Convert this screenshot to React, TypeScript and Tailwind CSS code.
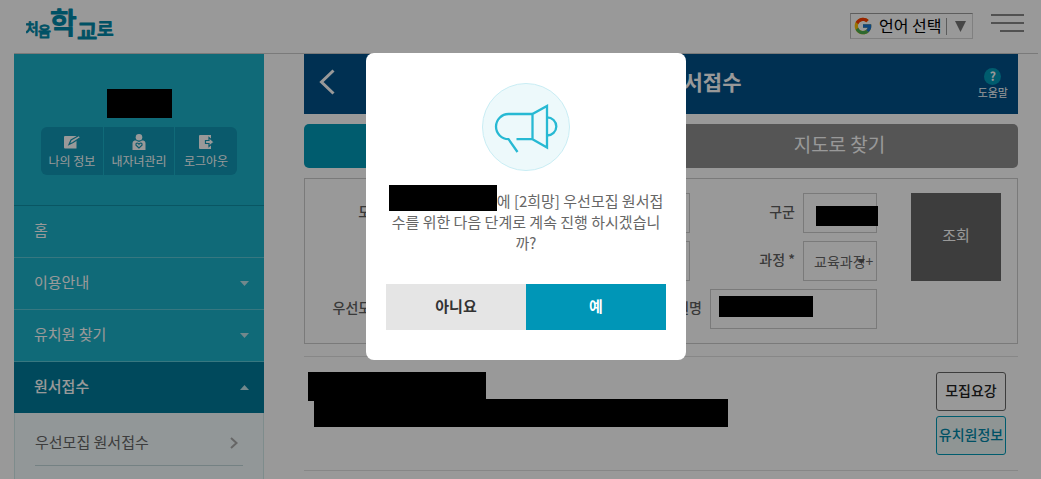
import type { ReactNode } from "react";
import { FcGoogle } from "react-icons/fc";

function Logo() {
   return (
      <svg
         viewBox="0 0 92 44"
         className="h-11 w-[92px]"
         fill="#0088a8"
         stroke="#0088a8"
         strokeLinejoin="round"
         fontFamily="'Noto Sans CJK KR', sans-serif"
         fontWeight="500">
         <text x="-1" y="34" fontSize="15" strokeWidth="0.8">처</text>
         <text x="12" y="36" fontSize="14" strokeWidth="0.8">음</text>
         <text x="24" y="34" fontSize="29" strokeWidth="1.2">학</text>
         <text x="51" y="39" fontSize="22" strokeWidth="1">교</text>
         <text x="71" y="36" fontSize="18" strokeWidth="1">로</text>
      </svg>
   );
}

function MegaphoneIcon() {
   return (
      <svg viewBox="0 0 88 88" className="h-[88px] w-[88px]" fill="none" stroke="#27b9d3" strokeWidth="2.3">
         <circle cx="44" cy="44" r="43.5" fill="#edf9fb" stroke="#c9edf4" strokeWidth="1" />
         <path d="M50.5 31H26.5A12.500 12.600 0 0 0 26.500 56.200L35.500 69" />
         <path d="M34.5 56.2H50.5V31L65 23V64.5L50.5 56.2" />
         <path d="M65 34.3A9.3 9.1 0 0 1 65 52.5" />
      </svg>
   );
}

function EditIcon() {
   return (
      <svg viewBox="0 0 18 16" className="h-4 w-[18px]">
         <path d="M2 2H13.500V14.500H2Q1 14.500 1 13.500V3Q1 2 2 2Z" fill="#fff" />
         <path d="M6 10.500L8 6L16 1.500L17.500 3.500L10 8.500Z" fill="#fff" stroke="#1196b4" strokeWidth="1.2" />
      </svg>
   );
}

function ChildIcon() {
   return (
      <svg viewBox="0 0 18 16" className="h-4 w-[18px]">
         <circle cx="9" cy="3.3" r="3.3" fill="#fff" />
         <path d="M4.500 6.500H6L9 8L12 6.500H13.500Q15.500 7 15.500 9V16H2.500V9Q2.500 7 4.500 6.500Z" fill="#fff" />
         <path d="M9 14L6 11.200Q5.500 9.500 7 9Q8.300 8.900 9 10.200Q9.700 8.900 11 9Q12.500 9.500 12 11.200Z" fill="none" stroke="#1196b4" strokeWidth="1.2" />
      </svg>
   );
}

function LogoutIcon() {
   return (
      <svg viewBox="0 0 18 16" className="h-4 w-[18px]">
         <path d="M3 1H14V15H3Q2 15 2 14V2Q2 1 3 1Z" fill="#fff" />
         <path d="M8.500 6.500H12V3.500L17 8L12 12.500V9.500H8.500Z" fill="#fff" stroke="#1196b4" strokeWidth="1.2" />
      </svg>
   );
}

function Caret({ up = false }: { up?: boolean }) {
   return (
      <svg viewBox="0 0 9 5" className="h-[5px] w-[9px]" fill="#bfe3ea">
         <path d={up ? "M0 5L4.5 0L9 5Z" : "M0 0H9L4.5 5Z"} />
      </svg>
   );
}

function ProfileLink({ icon, children }: { icon: ReactNode; children: ReactNode }) {
   return (
      <a href="#" className="flex flex-col items-center bg-[#1196b4] pt-[7px] text-xs leading-[18px] whitespace-nowrap text-white">
         {icon}
         <span className="pt-[2px]">{children}</span>
      </a>
   );
}

function Sidebar() {
   const items = [
      { name: "홈", caret: false },
      { name: "이용안내", caret: true },
      { name: "유치원 찾기", caret: true },
   ];

   return (
      <aside className="flex w-[250px] shrink-0 flex-col">
         <div className="flex h-[152px] flex-col items-center border-b border-[#0f8fa5] bg-[#1bb1c8] pt-[35px]">
            <div className="h-[29px] w-[65px] bg-black"></div>
            <div className="mt-[9px] grid h-12 w-[196px] grid-cols-[62px_70px_62px] gap-px overflow-hidden rounded-md">
               <ProfileLink icon={<EditIcon />}>나의 정보</ProfileLink>
               <ProfileLink icon={<ChildIcon />}>내자녀관리</ProfileLink>
               <ProfileLink icon={<LogoutIcon />}>로그아웃</ProfileLink>
            </div>
         </div>
         <nav className="flex flex-1 flex-col text-[15px] text-white">
            {items.map((item) => (
               <a
                  key={item.name}
                  href="#"
                  className="flex h-[52px] items-center justify-between border-b border-[#5cc6d6] bg-[#1bb1c8] pr-[15px] pl-5">
                  <span className="pb-[2px]">{item.name}</span>
                  {item.caret && <Caret />}
               </a>
            ))}
            <a href="#" className="flex h-[51px] items-center justify-between bg-[#007b99] pr-[15px] pl-5 font-medium">
               <span className="pb-[2px]">원서접수</span>
               <Caret up />
            </a>
            <div className="flex-1 border-x border-[#d3e9e9] bg-[#f3fcfd] px-5">
               <a href="#" className="flex h-[53px] items-center justify-between border-b border-[#c2d8da] pt-[8px] pr-[5px] text-[#666]">
                  <span className="pb-[2px]">우선모집 원서접수</span>
                  <svg viewBox="0 0 8 12" className="h-3 w-2" fill="none" stroke="#aaa" strokeWidth="2">
                     <path d="M1 1L6.500 6L1 11" />
                  </svg>
               </a>
            </div>
         </nav>
      </aside>
   );
}

function SearchForm() {
   const label = "pb-1 text-right text-sm font-medium whitespace-nowrap text-[#606060]";
   const field = "h-10 w-full appearance-none border border-[#ccc] bg-white pl-[10px] text-sm text-[#666]";

   return (
      <form className="mt-[10px] flex items-start gap-[34px] border border-[#ccc] py-[14px] pr-4 pl-4">
         <div className="flex flex-1 flex-col gap-2">
            <div className="flex items-center gap-2">
               <label htmlFor="city" className={`${label} w-[73px]`}>도시 *</label>
               <div className="flex-1">
                  <select id="city" className={field}></select>
               </div>
               <label htmlFor="district" className={`${label} w-[97px]`}>구군</label>
               <div className="relative w-[74px]">
                  <select id="district" className={field}></select>
                  <div className="absolute top-[13px] left-[13px] h-5 w-[62px] bg-black"></div>
               </div>
            </div>
            <div className="flex items-center gap-2">
               <label htmlFor="type" className={`${label} w-[73px]`}>유형</label>
               <div className="flex-1">
                  <select id="type" className={field}></select>
               </div>
               <label htmlFor="course" className={`${label} w-[97px]`}>과정 *</label>
               <div className="relative w-[74px]">
                  <select id="course" className={field}>
                     <option>교육과정+</option>
                  </select>
                  <svg viewBox="0 0 7 5" className="pointer-events-none absolute top-[18px] right-3 h-[5px] w-[7px]" fill="#555">
                     <path d="M0 0H7L3.500 5Z" />
                  </svg>
               </div>
            </div>
            <div className="flex items-center gap-2">
               <label htmlFor="priority" className={`${label} w-[73px]`}>우선모집 *</label>
               <div className="flex-1">
                  <select id="priority" className={field}></select>
               </div>
               <label htmlFor="school" className={label}>유치원명</label>
               <div className="relative w-[167px]">
                  <input id="school" type="text" className={field} />
                  <div className="absolute top-[7px] left-[9px] h-[21px] w-[94px] bg-black"></div>
               </div>
            </div>
         </div>
         <button type="button" className="h-[88px] w-[90px] bg-[#666] pb-1 text-[15px] text-white">조회</button>
      </form>
   );
}

function Content() {
   return (
      <main className="mr-5 ml-10 flex-1">
         <div className="flex h-[60px] items-center bg-[#005089] pr-[10px] pl-[15px] text-white">
            <button aria-label="뒤로" className="w-[31px] pb-1">
               <svg viewBox="0 0 16 26" className="h-[26px] w-4" fill="none" stroke="#fff" strokeWidth="3">
                  <path d="M14.500 1.500L2.500 13L14.500 24.500" />
               </svg>
            </button>
            <h1 className="flex-1 pr-[8px] pb-1 pl-1 text-center text-[21px] font-bold">우선모집 원서접수</h1>
            <button className="flex flex-col items-center pb-[2px] text-[11px] leading-[14px]">
               <span className="flex h-[17px] w-[17px] items-center justify-center rounded-full bg-[#0099b7] text-xs font-bold">?</span>
               도움말
            </button>
         </div>
         <div className="mt-[10px] grid h-11 grid-cols-2 overflow-hidden rounded-[5px] text-[19px] text-white">
            <button className="bg-[#0099b7] pb-1">목록으로 찾기</button>
            <button className="bg-[#8e8e8e] pb-1">지도로 찾기</button>
         </div>
         <SearchForm />
         <div className="mt-3 flex justify-between border-y border-[#e2e2e2] py-[15px] pr-3 pl-1">
            <div>
               <div className="h-[29px] w-[178px] bg-black"></div>
               <div className="-mt-[2px] ml-[6px] h-7 w-[414px] bg-black"></div>
            </div>
            <div className="flex w-[70px] flex-col gap-[5px] text-sm font-medium whitespace-nowrap">
               <button className="h-[39px] rounded-[3px] border border-[#666] pb-1 text-[#222]">모집요강</button>
               <button className="h-[39px] rounded-[3px] border border-[#0099b7] bg-[#eff9f7] pb-1 text-[#0088a8]">유치원정보</button>
            </div>
         </div>
      </main>
   );
}

function ConfirmModal() {
   return (
      <div className="fixed inset-0 flex items-start justify-center bg-black/40 pt-[53px] pr-[3px] pl-[14px]">
         <div role="dialog" className="flex w-80 flex-col items-center rounded-lg bg-white px-5 py-[30px]">
            <MegaphoneIcon />
            <p className="mt-[18px] text-center text-[15px] leading-[21px] whitespace-nowrap text-[#666]">
               <span className="-mt-1 inline-block h-[26px] w-[108px] bg-black align-bottom"></span>에 [2희망] 우선모집 원서접
               <br />
               수를 위한 다음 단계로 계속 진행 하시겠습니
               <br />
               까?
            </p>
            <div className="mt-[31px] grid h-[46px] w-full grid-cols-2 text-[15px] font-bold">
               <button className="bg-[#e5e5e5] pb-[2px] text-[#333]">아니요</button>
               <button className="bg-[#0096b7] pb-[2px] text-white">예</button>
            </div>
         </div>
      </div>
   );
}

export default function App() {
   return (
      <div className="flex min-h-screen flex-col bg-white pr-[3px] pl-[14px] font-['Noto_Sans_CJK_KR',sans-serif]">
         <header className="flex h-[54px] items-start justify-between border-b border-[#ccc] pr-[14px] pl-3">
            <a href="#" aria-label="처음학교로">
               <Logo />
            </a>
            <div className="flex items-start gap-[18px] pt-[13px]">
               <button className="flex h-[26px] w-[123px] items-center border border-[#d5d5d5] border-t-[#9b9b9b] border-l-[#bbb] pl-[2px] text-base leading-6 whitespace-nowrap text-black">
                  <FcGoogle className="h-5 w-5" />
                  <span className="pb-[2px] pl-[6px]">언어 선택</span>
                  <span className="ml-[5px] h-[17px] w-px bg-[#999]"></span>
                  <svg viewBox="0 0 11 11" className="ml-2 h-[11px] w-[11px]" fill="#767676">
                     <path d="M0 0H11L5.500 11Z" />
                  </svg>
               </button>
               <button aria-label="메뉴" className="flex w-[33px] flex-col items-end gap-[6px] pt-px">
                  <span className="h-[2px] w-full bg-[#888]"></span>
                  <span className="h-[2px] w-full bg-[#888]"></span>
                  <span className="h-[2px] w-6 bg-[#888]"></span>
               </button>
            </div>
         </header>
         <div className="flex flex-1">
            <Sidebar />
            <Content />
         </div>
         <ConfirmModal />
      </div>
   );
}
